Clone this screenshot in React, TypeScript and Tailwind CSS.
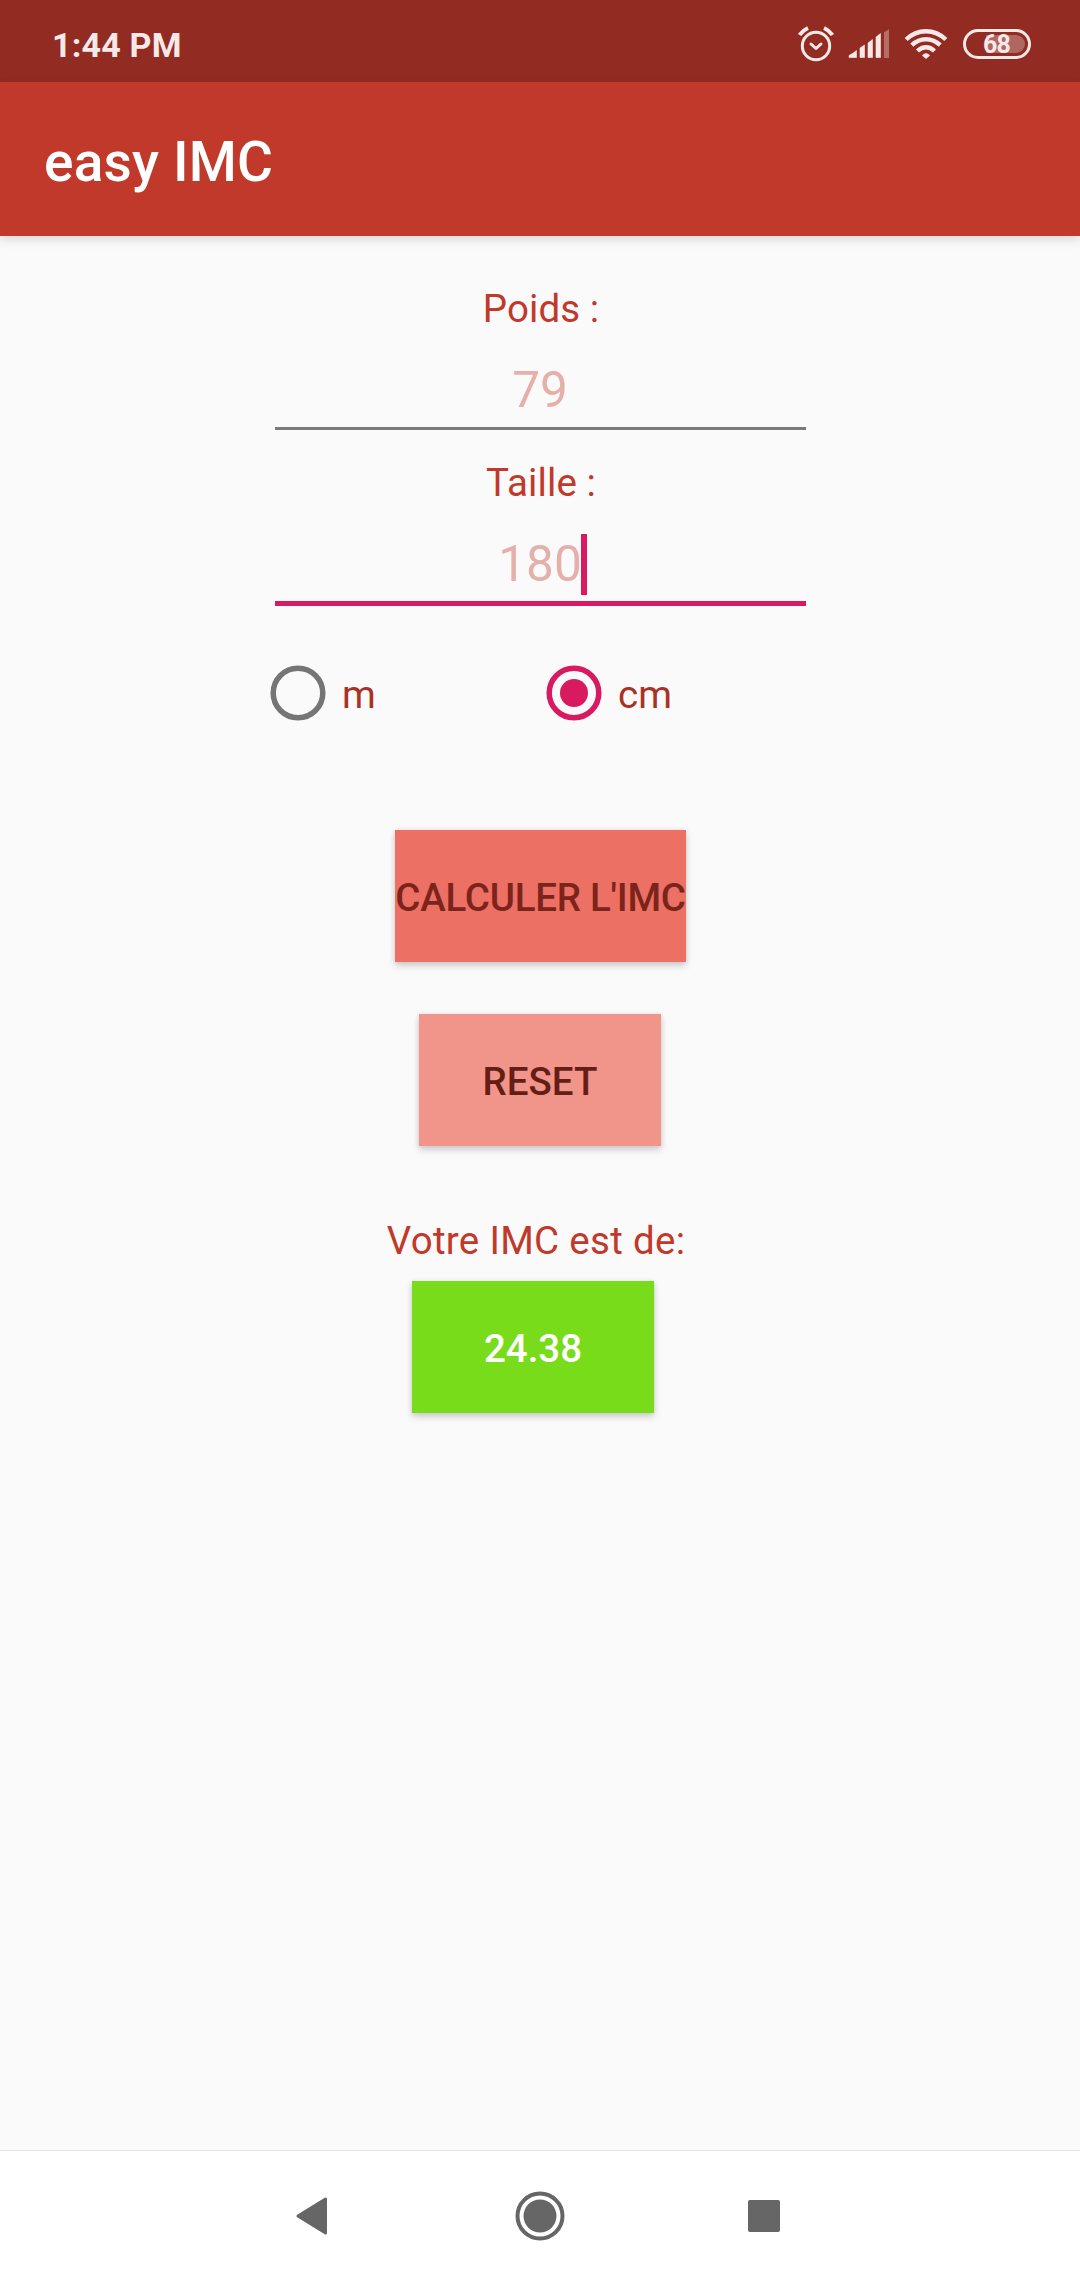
import React from "react";

function StatusBar() {
  return (
    <div className="flex h-[82px] items-start bg-[#922b21] pl-[52px] pr-[49px] text-[#f7e9e8]">
      <span className="mt-[25px] text-[34px] leading-[40px] font-bold tracking-[0.2px]">1:44 PM</span>
      <svg className="mt-[26px] ml-auto" width="36" height="36" viewBox="0 0 36 36" fill="none" stroke="currentColor" strokeWidth="3">
        <circle cx="18" cy="20" r="13.7" />
        <path d="M13 18l5 4.500 5-4.500" strokeLinecap="round" strokeLinejoin="round" />
        <path d="M1.500 9Q4.500 4.500 10 2M34.500 9Q31.500 4.500 26 2" strokeWidth="4" />
      </svg>
      <svg className="mt-[28px] ml-[14px]" width="42" height="32" viewBox="0 0 42 32" fill="currentColor">
        <path d="M1 27.500Q5 25.500 8.500 22.500V29.500H1zM12 20L16.500 17V29.500H12zM20 15L24.500 11.500V29.500H20zM28 9L32.500 5.500V29.500H28z" stroke="currentColor" strokeWidth=".6" strokeLinejoin="round" />
        <path d="M36 4Q39 3 41 1V30H36z" opacity=".35" />
      </svg>
      <svg className="mt-[28px] ml-[14px]" width="44" height="32" viewBox="0 0 44 32" fill="none" stroke="currentColor" strokeWidth="4.4">
        <path d="M2.200 11.500Q10.500 3.200 22 3.200T41.800 11.500M7.800 17.200Q14 11.200 22 11.200T36.200 17.200M13.500 23Q17.500 19.200 22 19.200T30.500 23" />
        <path d="M18 27.500Q22 23 26 27.500L22 31z" fill="currentColor" stroke="none" />
      </svg>
      <div className="mt-[29px] ml-[15px] flex h-[30px] w-[68px] items-center justify-center rounded-full border-[3px] border-current">
        <div className="flex h-[18px] w-[56px] items-center justify-center rounded-full bg-linear-to-r from-transparent from-30% to-[#b06661] to-30%">
          <span className="mt-px -ml-px text-[25px] leading-[24px] font-bold tracking-[-0.8px]">68</span>
        </div>
      </div>
    </div>
  );
}

function Field({ label, value, focused }: { label: string; value: string; focused?: boolean }) {
  return (
    <div className="flex h-[174px] flex-col items-center">
      <div className="ml-[2px] h-[45px] text-[38.5px] leading-[45px] tracking-[0.1px] text-[#c0392b]">{label}</div>
      <div
        className={
          focused
            ? "mt-[29px] h-[72px] w-[531px] border-b-[5px] border-[#d81b60] text-center"
            : "mt-[29px] h-[70px] w-[531px] border-b-[3px] border-[#7a7a7a] text-center"
        }
      >
        <span className="relative inline-block text-[49.5px] leading-[60px] text-[#e6b0aa]">
          {value}
          {focused && <span className="absolute top-0 -right-[5px] h-[61px] w-[6px] bg-[#d81b60]" />}
        </span>
      </div>
    </div>
  );
}

function Radio({ label, checked }: { label: string; checked?: boolean }) {
  return (
    <div className="flex w-[276px] shrink-0 items-center">
      <svg width="56" height="56" viewBox="0 0 56 56" fill="none">
        <circle cx="28" cy="28" r="24.8" strokeWidth="5.5" stroke={checked ? "#d81b60" : "#757575"} />
        {checked && <circle cx="28" cy="28" r="14" fill="#d81b60" />}
      </svg>
      <span className="mt-[3px] ml-[16px] text-[38.5px] leading-[45px] text-[#a93226]">{label}</span>
    </div>
  );
}

const buttonBase =
  "flex h-[132px] items-center justify-center whitespace-nowrap pt-[2px] text-[38.5px] leading-[45px] font-medium shadow-[0_4px_7px_rgba(0,0,0,0.17),0_0_5px_rgba(0,0,0,0.09)]";

export default function App() {
  return (
    <div className="flex h-[2280px] w-[1080px] flex-col bg-[#fafafa] font-['Roboto',sans-serif]">
      <StatusBar />
      <header className="flex h-[154px] items-center bg-[#c0392b] pl-[44px] shadow-[0_4px_10px_rgba(0,0,0,0.13)]">
        <h1 className="mt-[6px] text-[55px] leading-[64px] font-medium tracking-[0.2px] text-white">easy IMC</h1>
      </header>
      <main className="flex flex-1 flex-col items-center pt-[50px]">
        <Field label="Poids :" value="79" />
        <Field label="Taille :" value="180" focused />
        <div className="mt-[31px] flex h-[56px] w-[540px]">
          <Radio label="m" />
          <Radio label="cm" checked />
        </div>
        <button className={`${buttonBase} mt-[109px] w-[291px] bg-[#ec7063] pl-px tracking-[-0.25px] text-[#7b241c]`}>CALCULER L'IMC</button>
        <button className={`${buttonBase} mt-[52px] w-[242px] bg-[#f1948a] text-[#641e16]`}>RESET</button>
        <div className="mt-[72px] mr-[8px] text-[38.5px] leading-[45px] tracking-[0.3px] text-[#c0392b]">Votre IMC est de:</div>
        <div className={`${buttonBase} mt-[18px] mr-[14px] w-[242px] bg-[#78dc1b] text-white`}>24.38</div>
      </main>
      <nav className="flex h-[130px] items-center justify-center border-t border-[#e3e3e3] bg-white pr-[4px] text-[#666666]">
        <svg width="32" height="38" viewBox="0 0 32 38" fill="currentColor" stroke="currentColor" strokeWidth="3" strokeLinejoin="round">
          <path d="M2 19L29.500 2V36z" />
        </svg>
        <svg className="mr-[183px] ml-[187px]" width="50" height="50" viewBox="0 0 50 50" fill="none">
          <circle cx="25" cy="25" r="22.500" stroke="currentColor" strokeWidth="4" />
          <circle cx="25" cy="25" r="16.500" fill="currentColor" />
        </svg>
        <div className="h-[32px] w-[32px] rounded-[2px] bg-current" />
      </nav>
    </div>
  );
}
